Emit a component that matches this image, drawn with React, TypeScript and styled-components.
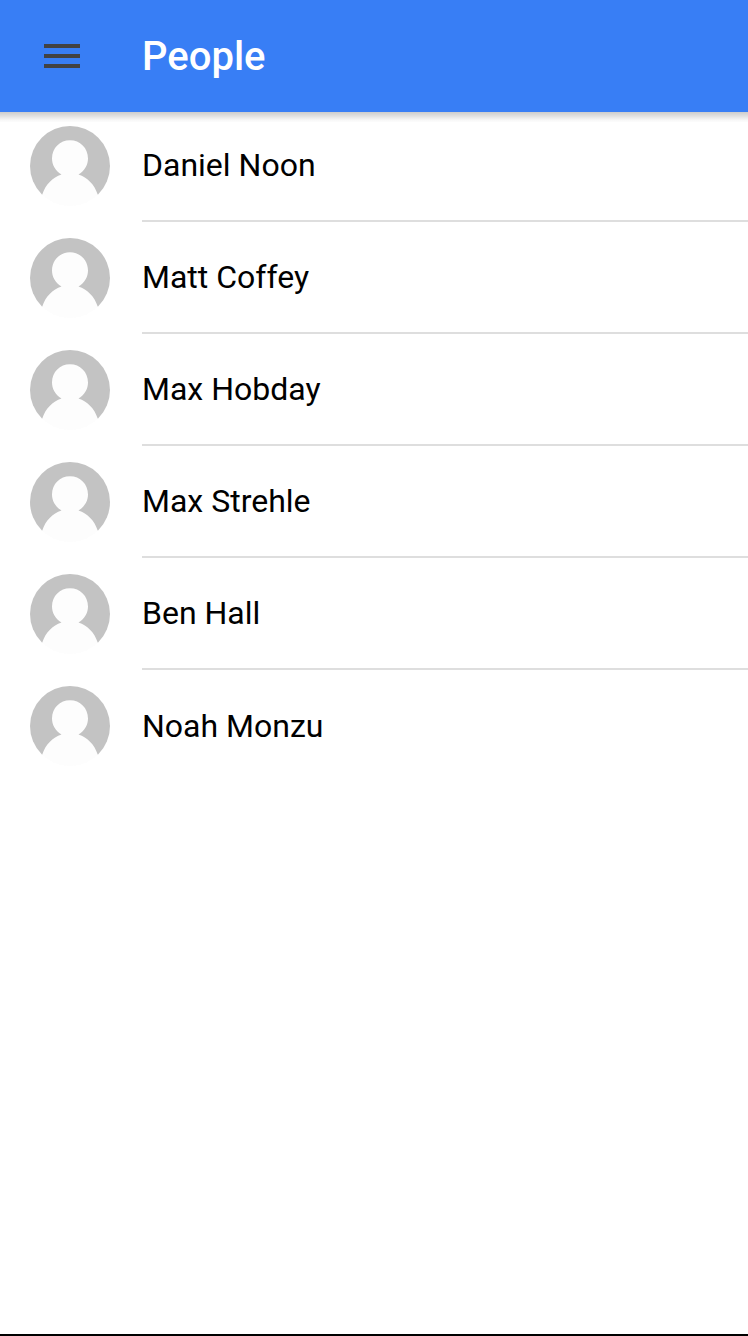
import React from "react";
import styled, { createGlobalStyle } from "styled-components";

const GlobalStyle = createGlobalStyle`
  *, *::before, *::after {
    box-sizing: border-box;
  }

  body {
    margin: 0;
    background: #fff;
    color: #000;
    font-family: Roboto, "Liberation Sans", sans-serif;
  }
`;

const Page = styled.div`
  display: flex;
  flex-direction: column;
  min-height: 100vh;
  border-bottom: 2px solid #000;
`;

const Toolbar = styled.header`
  position: relative;
  z-index: 1;
  display: flex;
  align-items: center;
  gap: 48px;
  height: 112px;
  padding: 0 30px;
  background: #387ef5;

  &::after {
    content: "";
    position: absolute;
    top: 100%;
    left: 0;
    right: 0;
    height: 10px;
    background: linear-gradient(
      rgba(0, 0, 0, 0.2),
      rgba(0, 0, 0, 0.12) 40%,
      rgba(0, 0, 0, 0.03) 80%,
      rgba(0, 0, 0, 0.01)
    );
    pointer-events: none;
  }
`;

const MenuButton = styled.button`
  display: grid;
  place-items: center;
  width: 64px;
  height: 64px;
  padding: 0;
  border: 0;
  background: transparent;
  color: #424242;
  cursor: pointer;
`;

const Title = styled.h1`
  margin: 0;
  color: #fff;
  font-size: 40px;
  font-weight: 500;
  line-height: 47px;
`;

const PeopleList = styled.ul`
  flex: 1;
  margin: -2px 0 0;
  padding: 0;
  list-style: none;
`;

const PersonRow = styled.li`
  display: flex;
  align-items: center;
  gap: 32px;
  min-height: 112px;
  padding-left: 30px;
`;

const PersonName = styled.div`
  display: flex;
  flex: 1;
  align-items: center;
  align-self: stretch;
  border-bottom: 2px solid #dedede;
  font-size: 32px;
  line-height: 40px;

  ${PersonRow}:last-child & {
    border-bottom: 0;
  }
`;

const AvatarImage = styled.svg`
  flex: none;
  width: 80px;
  height: 80px;
  border-radius: 50%;
`;

const MenuIcon = () => (
  <svg width="36" height="24" viewBox="0 0 36 24" fill="currentColor" aria-hidden="true">
    <path d="M0 0h36v4H0zM0 10h36v4H0zM0 20h36v4H0z" />
  </svg>
);

const Avatar = () => (
  <AvatarImage viewBox="0 0 80 80" aria-hidden="true">
    <rect width="80" height="69" fill="#c3c3c3" />
    <path
      fill="#fdfdfd"
      d="M31.500 48.500C25 44.500 22 38.500 22 32.500C22 22 30 14.300 40 14.300S58 22 58 32.500C58 38.500 55 44.500 48.500 48.500C57.500 51.500 64.500 58.500 67.700 68.500V80H12.300V68.500C15.500 58.500 22.500 51.500 31.500 48.500Z"
    />
    <path fill="#fdfdfd" d="M0 68.500H80V80H0Z" />
  </AvatarImage>
);

const people = [
  "Daniel Noon",
  "Matt Coffey",
  "Max Hobday",
  "Max Strehle",
  "Ben Hall",
  "Noah Monzu",
];

export default function App() {
  return (
    <>
      <GlobalStyle />
      <Page>
        <Toolbar>
          <MenuButton type="button" aria-label="Open menu">
            <MenuIcon />
          </MenuButton>
          <Title>People</Title>
        </Toolbar>
        <PeopleList>
          {people.map((name) => (
            <PersonRow key={name}>
              <Avatar />
              <PersonName>{name}</PersonName>
            </PersonRow>
          ))}
        </PeopleList>
      </Page>
    </>
  );
}
